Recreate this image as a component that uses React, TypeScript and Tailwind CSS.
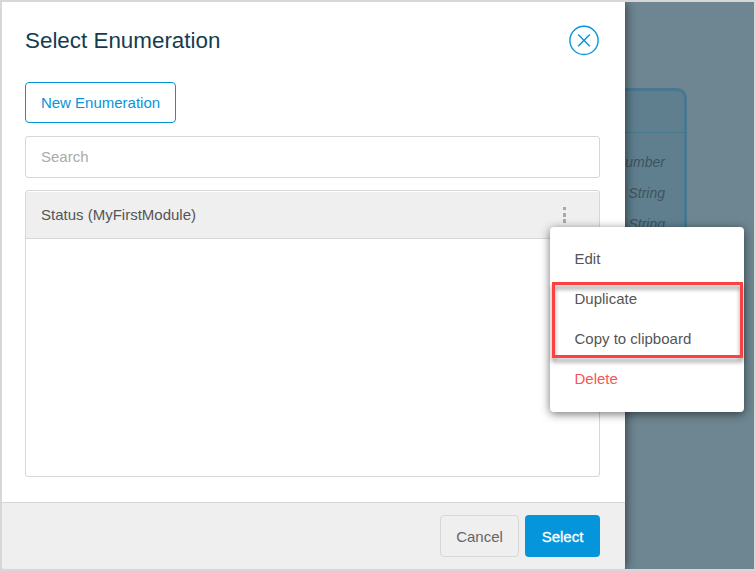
const attributeTypes = ["Number", "String", "String"];

function EntityCanvas() {
  return (
    <div className="flex min-w-0 flex-1 justify-start overflow-hidden bg-[#6e8691] pt-[86px]">
      <div className="-ml-8 h-[300px] w-[94px] shrink-0 overflow-hidden rounded-tr-[10px] border-[3px] border-l-0 border-[#47788f] bg-[#5f7f8f]">
        <div className="h-[42px] border-b border-[#47788f]" />
        <div className="flex flex-col items-end pt-[13px] pr-[19px]">
          {attributeTypes.map((type, i) => (
            <span key={i} className="h-[31px] text-sm leading-[32px] text-[#3e535e] italic">
              {type}
            </span>
          ))}
        </div>
      </div>
    </div>
  );
}

function ContextMenu() {
  return (
    <div className="absolute top-[225px] left-[548px] z-20 flex h-[185px] w-[194px] flex-col rounded-[4px] bg-white pt-[12px] text-[15px] text-[#555] shadow-[0_2px_10px_rgba(0,0,0,0.55)]">
      {["Edit", "Duplicate", "Copy to clipboard"].map((item) => (
        <button key={item} className="h-10 pl-[24.5px] text-left leading-10">
          {item}
        </button>
      ))}
      <button className="h-10 pl-[24.5px] text-left leading-10 text-[#f65656]">Delete</button>
      <div className="pointer-events-none absolute top-[55px] left-[2px] h-[76px] w-[191px] border-[3px] border-[#fb4141] drop-shadow-[0_4px_2px_rgba(0,0,0,0.4)]" />
    </div>
  );
}

export default function App() {
  return (
    <div className="h-[571px] w-[756px] overflow-hidden border-2 border-[#d7d7d7] font-['Liberation_Sans',Arial,sans-serif]">
      <div className="relative flex h-full">
        <div className="relative z-10 flex w-[623px] shrink-0 flex-col rounded-b-[3px] bg-white shadow-[0_0_12px_rgba(0,0,0,0.65)]">
          <div className="flex flex-1 flex-col pr-[25px] pl-[23px]">
            <header className="flex h-[80px] items-start justify-between">
              <h1 className="pt-[23px] text-[22.4px] leading-8 text-[#143c50]">Select Enumeration</h1>
              <button aria-label="Close" className="mt-[23px]">
                <svg width="31" height="31" viewBox="0 0 31 31" fill="none" stroke="#0595db">
                  <circle cx="15" cy="15.4" r="14.1" strokeWidth="1.4" />
                  <path d="M9.2 9.6 20.8 21.2M20.8 9.6 9.2 21.2" strokeWidth="1.4" />
                </svg>
              </button>
            </header>
            <button className="h-[41px] w-[151px] rounded-[4px] border border-[#0595db] pt-[2px] text-[15px] text-[#0595db]">
              New Enumeration
            </button>
            <input
              placeholder="Search"
              className="mt-[13px] h-[42px] rounded-[3px] border border-[#d7d7d7] px-[15px] pb-[2px] text-[15px] placeholder:text-[#aaa]"
            />
            <div className="mt-[12px] h-[287px] overflow-hidden rounded-[3px] border border-[#d7d7d7]">
              <div className="mt-px flex h-[47px] items-center justify-between border-b border-[#d7d7d7] bg-[#efefef] pr-[33px] pl-[15px]">
                <span className="text-[15px] text-[#555]">Status (MyFirstModule)</span>
                <span className="flex flex-col">
                  <i className="mb-[3px] h-[3px] w-[3px] bg-[#a9a9a9]" />
                  <i className="mb-[2px] h-1 w-[3px] bg-[#a9a9a9]" />
                  <i className="h-1 w-[3px] bg-[#a9a9a9]" />
                </span>
              </div>
            </div>
          </div>
          <footer className="flex h-[67px] items-start justify-end gap-[6px] rounded-b-[3px] border-t border-[#d7d7d7] bg-[#efefef] pt-[12px] pr-[25px] text-[15px]">
            <button className="h-[42px] w-[79px] rounded-[4px] border border-[#d7d7d7] pt-[2px] text-[#666]">Cancel</button>
            <button className="h-[42px] w-[75px] rounded-[4px] bg-[#0595db] pt-[2px] text-white [-webkit-text-stroke:0.3px_white]">
              Select
            </button>
          </footer>
        </div>
        <EntityCanvas />
        <ContextMenu />
      </div>
    </div>
  );
}
